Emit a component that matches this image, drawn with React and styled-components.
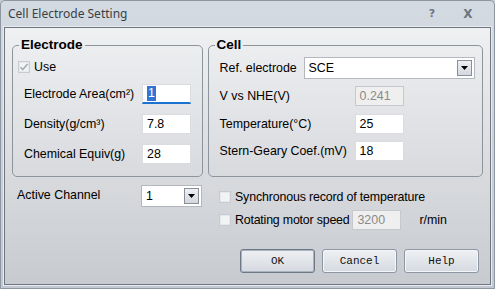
import React from 'react'
import styled, { createGlobalStyle } from 'styled-components'

const Global = createGlobalStyle`
  html, body { margin: 0; padding: 0; background: #c4cbd4; }
  * { box-sizing: border-box; }
`

const Window = styled.div`
  width: 495px;
  height: 289px;
  display: flex;
  flex-direction: column;
  background: linear-gradient(#d3dae2, #c2c9d2);
  border: 1px solid #8d96a1;
  border-radius: 5px 5px 0 0;
  padding: 0 3px 3px 3px;
  font-family: "Liberation Sans", Arial, sans-serif;
`

const TitleBar = styled.div`
  height: 26px;
  display: flex;
  align-items: center;
  padding: 0 0 1px 4px;
  font-family: "Noto Sans", "Open Sans", sans-serif;
  font-size: 12px;
  color: #3a3f46;
  flex-shrink: 0;
`

const Title = styled.div`
  flex: 1;
`

const TitleBtn = styled.div`
  width: ${p => p.w}px;
  text-align: center;
  font-size: ${p => p.fs}px;
  font-weight: bold;
  color: #6b7480;
  font-family: "DejaVu Sans", sans-serif;
`

const Client = styled.div`
  flex: 1;
  border: 1px solid #6f7680;
  box-shadow: 0 0 0 1px #e8ecf0;
  background: linear-gradient(#eff0f2, #c7cacf);
  display: flex;
  flex-direction: column;
  padding: 9px 7px 0 7px;
`

const TopRow = styled.div`
  display: flex;
  gap: 5px;
`

const Group = styled.fieldset`
  margin: 0;
  width: ${p => p.w}px;
  height: 140px;
  border: 1px solid #8e949c;
  border-radius: 5px;
  padding: ${p => p.pad};
  display: flex;
  flex-direction: column;
  gap: ${p => p.gap}px;
`

const Legend = styled.legend`
  font-weight: bold;
  font-size: 13.5px;
  line-height: 16px;
  padding: 0 2px;
  margin-left: ${p => p.ml}px;
  color: #000;
`

const CheckRow = styled.label`
  display: flex;
  align-items: center;
  gap: 4px;
  font-size: 12.4px;
  color: #000;
  height: 16px;
  white-space: nowrap;
  letter-spacing: ${p => p.ls || 0}px;
`

const Box = styled.span`
  width: 12px;
  height: 12px;
  border: 1px solid #c8ccd2;
  background: #f2f3f5;
  display: flex;
  align-items: center;
  justify-content: center;
  box-shadow: inset 0 0 0 1px #e6e8eb;
`

const Row = styled.div`
  display: flex;
  align-items: center;
  height: ${p => p.h || 20}px;
  padding-left: ${p => p.pl || 0}px;
  margin-top: ${p => p.mt || 0}px;
`

const Label = styled.span`
  width: ${p => p.w}px;
  font-size: 12.4px;
  color: #000;
  white-space: nowrap;
  flex-shrink: 0;
  margin-top: ${p => p.mt || 0}px;
`

const Input = styled.div`
  width: 49px;
  height: 20px;
  margin-left: ${p => p.ml || 0}px;
  border: 1px solid ${p => (p.disabled ? '#c6c8cc' : '#dadce0')};
  border-bottom: ${p => (p.focused ? '2px solid #1a73d0' : `1px solid ${p.disabled ? '#c6c8cc' : '#dadce0'}`)};
  background: ${p => (p.disabled ? '#efefef' : '#fff')};
  color: ${p => (p.disabled ? '#8a8a8a' : '#000')};
  font-size: 12.4px;
  display: flex;
  align-items: center;
  padding-left: 4px;
  flex-shrink: 0;
`

const Selected = styled.span`
  background: #3373d4;
  color: #fff;
  padding: 0 1px;
  line-height: 15px;
`

const Combo = styled.div`
  width: ${p => p.w}px;
  height: ${p => p.h}px;
  border: 1px solid #b4b8be;
  background: #fff;
  display: flex;
  align-items: center;
  padding: 0 2px 0 4px;
  font-size: 12.4px;
`

const ComboText = styled.span`
  flex: 1;
`

const ArrowBtn = styled.span`
  width: 15px;
  height: 16px;
  border: 1px solid #8a909a;
  background: linear-gradient(#eef0f4, #d4d7de);
  display: flex;
  align-items: center;
  justify-content: center;
`

const Arrow = () => (
  <svg width="7" height="4" viewBox="0 0 7 4">
    <path d="M0 0h7L3.5 4z" fill="#000" />
  </svg>
)

const Bottom = styled.div`
  display: flex;
  padding-top: 8px;
`

const LeftCol = styled.div`
  width: 203px;
  display: flex;
  align-items: flex-start;
  padding-left: 5px;
`

const RightCol = styled.div`
  flex: 1;
  display: flex;
  flex-direction: column;
  padding-top: 2px;
  padding-left: 4px;
  gap: 3px;
`

const Unit = styled.span`
  font-size: 12.4px;
  margin-left: 18px;
`

const Buttons = styled.div`
  display: flex;
  gap: 7px;
  margin-top: 16px;
  margin-left: 21px;
`

const Button = styled.div`
  width: 75px;
  height: 24px;
  border: 1px solid ${p => (p.primary ? '#6e7886' : '#8e96a2')};
  box-shadow: ${p => (p.primary ? 'inset 0 0 0 1px #aab3c0' : 'inset 0 0 0 1px #f4f6f9')};
  border-radius: 3px;
  background: linear-gradient(#eef0f3, #d5d9e0);
  display: flex;
  align-items: center;
  justify-content: center;
  font-family: "Liberation Mono", "DejaVu Sans Mono", monospace;
  font-size: 11px;
  color: #111;
`

const Check = () => (
  <svg width="10" height="10" viewBox="0 0 10 10">
    <path d="M1.5 5.2l2.3 2.4L8.6 2" stroke="#a8acb2" strokeWidth="1.6" fill="none" />
  </svg>
)

export default function App() {
  return (
    <>
      <Global />
      <Window>
        <TitleBar>
          <Title>Cell Electrode Setting</Title>
          <TitleBtn w={26} fs={11}>?</TitleBtn>
          <TitleBtn w={46} fs={12}>X</TitleBtn>
        </TitleBar>
        <Client>
          <TopRow>
            <Group w={191} pad="6px 10px 0 5px" gap={10}>
              <Legend ml={1}>Electrode</Legend>
              <CheckRow>
                <Box><Check /></Box>
                Use
              </CheckRow>
              <Row pl={6} mt={-1}>
                <Label w={118}>Electrode Area(cm²)</Label>
                <Input focused><Selected>1</Selected></Input>
              </Row>
              <Row pl={6}>
                <Label w={118}>Density(g/cm³)</Label>
                <Input>7.8</Input>
              </Row>
              <Row pl={6}>
                <Label w={118}>Chemical Equiv(g)</Label>
                <Input>28</Input>
              </Row>
            </Group>
            <Group w={276} pad="4px 0 0 11px" gap={8}>
              <Legend ml={-5}>Cell</Legend>
              <Row h={22}>
                <Label w={84}>Ref. electrode</Label>
                <Combo w={171} h={22}>
                  <ComboText>SCE</ComboText>
                  <ArrowBtn><Arrow /></ArrowBtn>
                </Combo>
              </Row>
              <Row mt={-1}>
                <Label w={135}>V vs NHE(V)</Label>
                <Input disabled>0.241</Input>
              </Row>
              <Row>
                <Label w={135}>Temperature(°C)</Label>
                <Input>25</Input>
              </Row>
              <Row mt={-1}>
                <Label w={135}>Stern-Geary Coef.(mV)</Label>
                <Input>18</Input>
              </Row>
            </Group>
          </TopRow>
          <Bottom>
            <LeftCol>
              <Label w={124} mt={3}>Active Channel</Label>
              <Combo w={61} h={22}>
                <ComboText>1</ComboText>
                <ArrowBtn><Arrow /></ArrowBtn>
              </Combo>
            </LeftCol>
            <RightCol>
              <Row>
                <CheckRow ls={-0.15}>
                  <Box />
                  Synchronous record of temperature
                </CheckRow>
              </Row>
              <Row>
                <CheckRow ls={-0.2}>
                  <Box />
                  Rotating motor speed
                </CheckRow>
                <Input disabled ml={3}>3200</Input>
                <Unit>r/min</Unit>
              </Row>
              <Buttons>
                <Button primary>OK</Button>
                <Button>Cancel</Button>
                <Button>Help</Button>
              </Buttons>
            </RightCol>
          </Bottom>
        </Client>
      </Window>
    </>
  )
}
